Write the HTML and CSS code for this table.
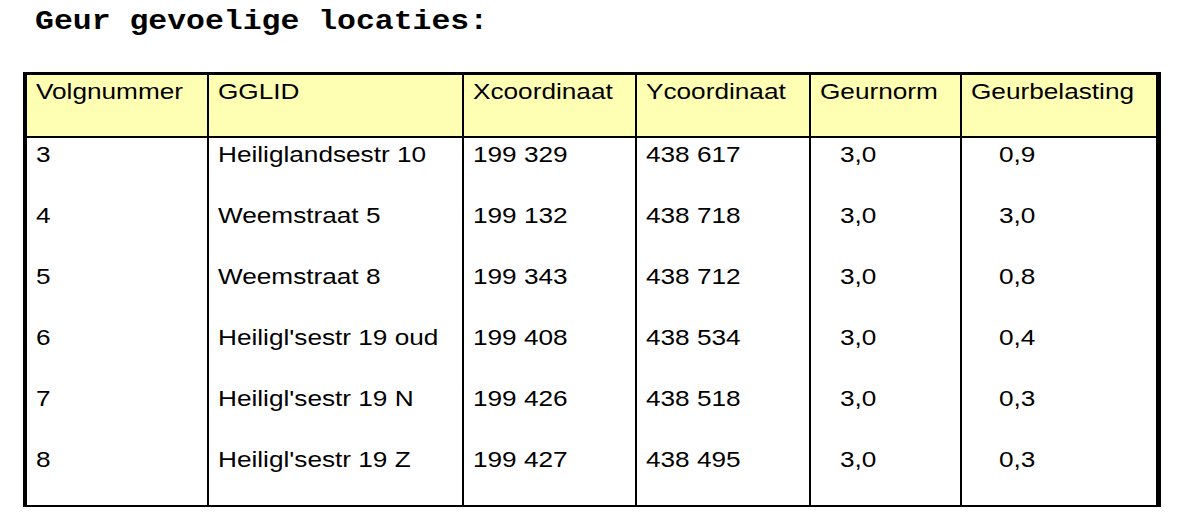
FILE: index.html
```html
<!DOCTYPE html>
<html lang="nl">
<head>
<meta charset="utf-8">
<title>Geur gevoelige locaties</title>
<link rel="stylesheet" href="styles.css">
</head>
<body>
<h1 class="title"><span class="stretch stretch-title">Geur gevoelige locaties:</span></h1>
<table class="grid">
  <colgroup>
    <col class="c1"><col class="c2"><col class="c3"><col class="c4"><col class="c5"><col class="c6">
  </colgroup>
  <thead>
    <tr>
      <th><span class="stretch">Volgnummer</span></th>
      <th><span class="stretch">GGLID</span></th>
      <th><span class="stretch">Xcoordinaat</span></th>
      <th><span class="stretch">Ycoordinaat</span></th>
      <th><span class="stretch">Geurnorm</span></th>
      <th><span class="stretch">Geurbelasting</span></th>
    </tr>
  </thead>
  <tbody>
    <tr>
      <td><span class="stretch">3</span></td>
      <td><span class="stretch">Heiliglandsestr 10</span></td>
      <td><span class="stretch">199 329</span></td>
      <td><span class="stretch">438 617</span></td>
      <td class="norm"><span class="stretch">3,0</span></td>
      <td class="load"><span class="stretch">0,9</span></td>
    </tr>
    <tr>
      <td><span class="stretch">4</span></td>
      <td><span class="stretch">Weemstraat 5</span></td>
      <td><span class="stretch">199 132</span></td>
      <td><span class="stretch">438 718</span></td>
      <td class="norm"><span class="stretch">3,0</span></td>
      <td class="load"><span class="stretch">3,0</span></td>
    </tr>
    <tr>
      <td><span class="stretch">5</span></td>
      <td><span class="stretch">Weemstraat 8</span></td>
      <td><span class="stretch">199 343</span></td>
      <td><span class="stretch">438 712</span></td>
      <td class="norm"><span class="stretch">3,0</span></td>
      <td class="load"><span class="stretch">0,8</span></td>
    </tr>
    <tr>
      <td><span class="stretch">6</span></td>
      <td><span class="stretch">Heiligl'sestr 19 oud</span></td>
      <td><span class="stretch">199 408</span></td>
      <td><span class="stretch">438 534</span></td>
      <td class="norm"><span class="stretch">3,0</span></td>
      <td class="load"><span class="stretch">0,4</span></td>
    </tr>
    <tr>
      <td><span class="stretch">7</span></td>
      <td><span class="stretch">Heiligl'sestr 19 N</span></td>
      <td><span class="stretch">199 426</span></td>
      <td><span class="stretch">438 518</span></td>
      <td class="norm"><span class="stretch">3,0</span></td>
      <td class="load"><span class="stretch">0,3</span></td>
    </tr>
    <tr class="last">
      <td><span class="stretch">8</span></td>
      <td><span class="stretch">Heiligl'sestr 19 Z</span></td>
      <td><span class="stretch">199 427</span></td>
      <td><span class="stretch">438 495</span></td>
      <td class="norm"><span class="stretch">3,0</span></td>
      <td class="load"><span class="stretch">0,3</span></td>
    </tr>
  </tbody>
</table>
</body>
</html>
```

FILE: styles.css
```css
html, body {
  margin: 0;
  padding: 0;
  background: #ffffff;
  color: #000000;
}

.stretch {
  display: inline-block;
  transform: scaleX(1.19);
  transform-origin: left center;
  white-space: nowrap;
}

.stretch-title {
  transform: scaleX(1.165);
}

.title {
  margin: 7px 0 0 0;
  padding-left: 35px;
  font-family: "Liberation Mono", "Courier New", monospace;
  font-weight: bold;
  font-size: 27px;
  line-height: 30px;
  height: 30px;
}

.grid {
  margin: 35px 0 0 23px;
  border-collapse: separate;
  border-spacing: 0;
  table-layout: fixed;
  border-top: 3px solid #000;
  border-left: 4px solid #000;
  border-right: 5px solid #000;
  border-bottom: 2px solid #000;
  font-family: "Liberation Sans", Arial, sans-serif;
  font-size: 22px;
  line-height: 25px;
}

.c1 { width: 180px; }
.c2 { width: 255px; }
.c3 { width: 173px; }
.c4 { width: 174px; }
.c5 { width: 151px; }
.c6 { width: 196px; }

.grid th,
.grid td {
  box-sizing: border-box;
  height: 61px;
  padding: 4px 0 0 9px;
  vertical-align: top;
  text-align: left;
  font-weight: normal;
  border-left: 2px solid #000;
}

.grid th:first-child,
.grid td:first-child {
  border-left: none;
}

.grid th {
  height: 63px;
  background: #ffffb3;
  border-bottom: 2px solid #000;
}

.grid tr.last td {
  height: 62px;
}

.grid td.norm {
  padding-left: 29px;
}

.grid td.load {
  padding-left: 37px;
}
```
